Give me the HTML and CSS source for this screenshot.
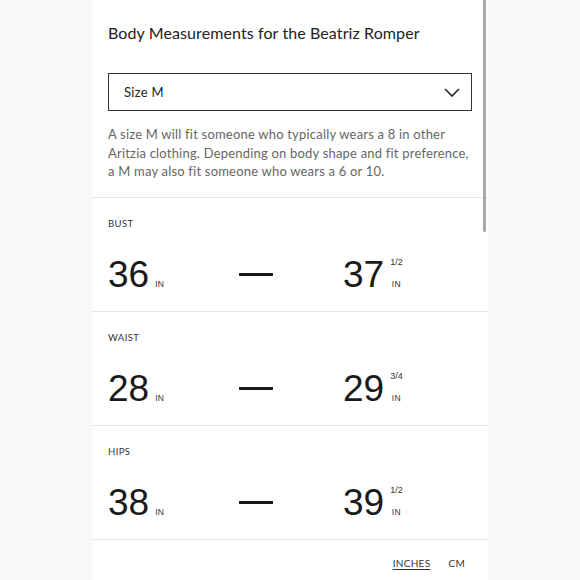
FILE: index.html
```html
<!DOCTYPE html>
<html lang="en">
<head>
<meta charset="utf-8">
<title>Body Measurements</title>
<link rel="stylesheet" href="styles.css">
</head>
<body>
<div class="panel">
  <div class="scrollbar"></div>
  <div class="intro">
    <h2 class="title">Body Measurements for the Beatriz Romper</h2>
    <div class="select">
      <span class="select-label">Size M</span>
      <svg class="chevron" width="16" height="9" viewBox="0 0 16 9" aria-hidden="true">
        <path d="M1 1 L8 8 L15 1" fill="none" stroke="#222" stroke-width="1.6"/>
      </svg>
    </div>
    <p class="note">A size M will fit someone who typically wears a 8 in other Aritzia clothing. Depending on body shape and fit preference, a M may also fit someone who wears a 6 or 10.</p>
  </div>

  <section class="measure">
    <div class="label">BUST</div>
    <div class="range">
      <div class="value"><span class="num">36</span><span class="unit"><span class="in">IN</span></span></div>
      <div class="dash"></div>
      <div class="value"><span class="num">37</span><span class="unit"><span class="frac">1/2</span><span class="in">IN</span></span></div>
    </div>
  </section>

  <section class="measure">
    <div class="label">WAIST</div>
    <div class="range">
      <div class="value"><span class="num">28</span><span class="unit"><span class="in">IN</span></span></div>
      <div class="dash"></div>
      <div class="value"><span class="num">29</span><span class="unit"><span class="frac">3/4</span><span class="in">IN</span></span></div>
    </div>
  </section>

  <section class="measure">
    <div class="label">HIPS</div>
    <div class="range">
      <div class="value"><span class="num">38</span><span class="unit"><span class="in">IN</span></span></div>
      <div class="dash"></div>
      <div class="value"><span class="num">39</span><span class="unit"><span class="frac">1/2</span><span class="in">IN</span></span></div>
    </div>
  </section>

  <div class="units">
    <span class="unit-toggle active">INCHES</span>
    <span class="unit-toggle">CM</span>
  </div>
</div>
</body>
</html>
```

FILE: styles.css
```css
html, body {
  margin: 0;
  height: 100%;
}

body {
  background: #f8f8f8;
  font-family: "Lato", "Liberation Sans", sans-serif;
  color: #222;
  overflow: hidden;
}

.panel {
  position: relative;
  margin-left: 92px;
  width: 396px;
  height: 580px;
  background: #fff;
}

.scrollbar {
  position: absolute;
  top: 0;
  right: 2px;
  width: 3px;
  height: 232px;
  background: #a9a9a9;
  border-radius: 0 0 2px 2px;
}

.intro {
  padding: 23px 16px 16px 16px;
}

.title {
  margin: 0;
  font-size: 16px;
  font-weight: 400;
  line-height: 20px;
  letter-spacing: 0.1px;
  color: #222;
}

.select {
  margin-top: 30px;
  width: 364px;
  height: 38px;
  box-sizing: border-box;
  border: 1px solid #333;
  display: flex;
  align-items: center;
  justify-content: space-between;
  padding: 0 11px 0 15px;
}

.select-label {
  font-size: 13px;
  letter-spacing: 0.3px;
  color: #222;
}

.chevron {
  display: block;
}

.note {
  margin: 14px 0 0;
  width: 366px;
  font-size: 13px;
  line-height: 18.5px;
  letter-spacing: 0.2px;
  color: #666;
}

.measure {
  border-top: 1px solid #e8e8e8;
  padding: 20px 16px 18px;
}

.label {
  font-size: 9.5px;
  line-height: 12px;
  letter-spacing: 0.4px;
  color: #333;
}

.range {
  margin-top: 26px;
  display: grid;
  grid-template-columns: 131px 104px auto;
  align-items: center;
}

.value {
  display: flex;
  align-items: stretch;
}

.num {
  font-family: "Liberation Sans", Arial, sans-serif;
  font-size: 37px;
  line-height: 37px;
  color: #1a1a1a;
}

.unit {
  display: flex;
  flex-direction: column;
  align-items: center;
  justify-content: space-between;
  margin-left: 6px;
  font-family: "Liberation Sans", Arial, sans-serif;
  color: #333;
}

.unit .in:only-child {
  margin-top: auto;
}

.frac {
  margin-top: 1px;
  font-size: 9px;
  line-height: 10px;
}

.in {
  font-size: 8.5px;
  line-height: 9px;
  padding-bottom: 4px;
  letter-spacing: 0.3px;
}

.dash {
  width: 34px;
  height: 3px;
  background: #1a1a1a;
}

.units {
  border-top: 1px solid #e8e8e8;
  display: flex;
  justify-content: flex-end;
  gap: 18px;
  padding: 17px 23px 0 0;
}

.unit-toggle {
  font-size: 10px;
  line-height: 12px;
  letter-spacing: 0.3px;
  color: #333;
}

.unit-toggle.active {
  text-decoration: underline;
  text-underline-offset: 2px;
}
```
